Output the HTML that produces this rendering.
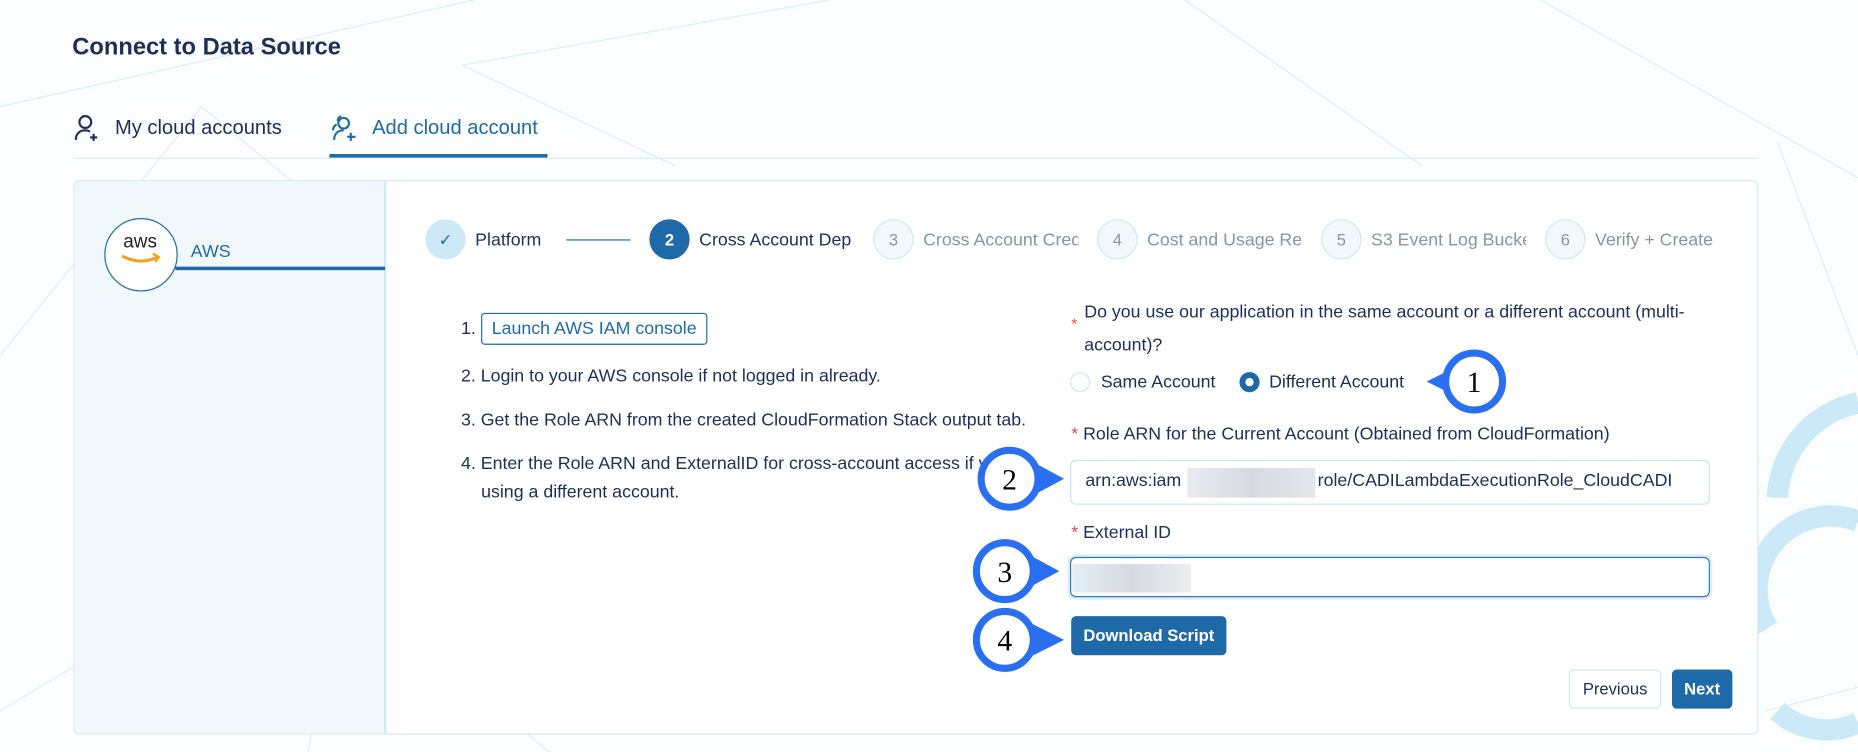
<!DOCTYPE html>
<html><head><meta charset="utf-8"><style>
*{box-sizing:border-box;margin:0;padding:0}
body{width:1858px;height:752px;overflow:hidden;background:#fbfdfe;font-family:"Liberation Sans",sans-serif;color:#1f2d5a;position:relative}
#w{position:absolute;left:0;top:0;width:1568px;height:635px;transform:scale(1.18495);transform-origin:0 0}
.abs{position:absolute}
.t{font-size:15px;white-space:nowrap}
.sc{position:absolute;width:34px;height:34px;border-radius:50%;border:1px solid #cfe8f5;background:#f2f9fd;color:#8a93a8;font-size:14px;text-align:center;line-height:32px}
.sl{position:absolute;font-size:15px;color:#8a93a8;white-space:nowrap;overflow:hidden}
</style></head><body><div id="w">
<svg class="abs" style="left:0;top:0" width="1568" height="635">
<g stroke="#dcedf6" stroke-width="1" fill="none">
<line x1="0" y1="90" x2="400" y2="0"/><line x1="170" y1="90" x2="400" y2="280"/><line x1="0" y1="300" x2="170" y2="90"/><line x1="390" y1="55" x2="700" y2="0"/><line x1="390" y1="55" x2="570" y2="140"/><line x1="130" y1="360" x2="470" y2="640"/><line x1="0" y1="600" x2="300" y2="420"/><line x1="1300" y1="0" x2="1568" y2="150"/><line x1="1500" y1="120" x2="1568" y2="300"/><line x1="1490" y1="600" x2="1568" y2="580"/><line x1="300" y1="420" x2="260" y2="635"/><line x1="1000" y1="0" x2="1200" y2="140"/>
</g>
<g fill="none" stroke="#cbe9f7" stroke-width="18">
<path d="M1500 420 A85 85 0 0 1 1568 340"/>
<path d="M1492 530 A62 62 0 0 1 1568 440"/>
<path d="M1500 600 A62 62 0 0 0 1568 610"/>
</g>
</svg>
<div class="abs" style="left:61px;top:29px;font-size:20px;font-weight:bold;color:#1f2d5a">Connect to Data Source</div>
<svg class="abs" style="left:62px;top:96px" width="24" height="24" viewBox="0 0 24 24" fill="none" stroke="#1f2d5a" stroke-width="1.8"><circle cx="10" cy="7" r="5"/><path d="M2 22c0-5 3-8 8-8 2 0 3 .5 4 1"/><path d="M17 17v6M14 20h6"/></svg>
<div class="abs t" style="left:97px;top:98px;font-size:17px">My cloud accounts</div>
<svg class="abs" style="left:278px;top:96px" width="24" height="24" viewBox="0 0 24 24" fill="none" stroke="#1e6aa8" stroke-width="1.8"><circle cx="12" cy="8" r="4.5"/><path d="M7 6a4 4 0 0 1 3-4M3 14a6 6 0 0 1 3-5M4 22c0-5 3-8 8-8"/><path d="M18 16v7M15 19.5h7"/></svg>
<div class="abs t" style="left:314px;top:98px;font-size:17px;color:#1e6aa8">Add cloud account</div>
<div class="abs" style="left:62px;top:133px;width:1422px;height:1px;background:#d6ecf6"></div>
<div class="abs" style="left:278px;top:130px;width:184px;height:3px;background:#1e6aa8"></div>

<div class="abs" style="left:62px;top:152px;width:1422px;height:468px;border:1px solid #d3e9f4;border-radius:5px;background:#fff;overflow:hidden">
 <div class="abs" style="left:0;top:0;width:263px;height:468px;background:#f1f8fc;border-right:2px solid #d3e9f4"></div>
</div>
<div class="abs" style="left:148px;top:225px;width:177px;height:3px;background:#1e6aa8"></div>
<div class="abs" style="left:88px;top:184px;width:62px;height:62px;border-radius:50%;border:1px solid #1e6aa8;background:#fff"></div>
<div class="abs" style="left:104px;top:196px;font-size:16px;color:#222">aws</div>
<svg class="abs" style="left:101px;top:213px" width="36" height="12"><path d="M2 3q15 8 30 1" stroke="#f3a11e" stroke-width="2.5" fill="none"/><path d="M28 1l5 3-3 4" stroke="#f3a11e" stroke-width="2" fill="none"/></svg>
<div class="abs" style="left:161px;top:204px;font-size:15px;color:#1e6aa8">AWS</div>

<div class="sc" style="left:359px;top:185px;background:#cde8f7;border-color:#cde8f7;color:#1e6aa8">✓</div>
<div class="abs t" style="left:401px;top:194px">Platform</div>
<div class="abs" style="left:478px;top:202px;width:54px;height:1px;background:#1e6aa8"></div>
<div class="sc" style="left:548px;top:185px;background:#1e6aa8;border-color:#1e6aa8;color:#fff;font-weight:bold">2</div>
<div class="abs t" style="left:590px;top:194px;width:130px;overflow:hidden">Cross Account Dep</div>
<div class="sc" style="left:737px;top:185px">3</div><div class="sl" style="left:779px;top:194px;width:131px">Cross Account Credentials</div>
<div class="sc" style="left:926px;top:185px">4</div><div class="sl" style="left:968px;top:194px;width:130px">Cost and Usage Report</div>
<div class="sc" style="left:1115px;top:185px">5</div><div class="sl" style="left:1157px;top:194px;width:131px">S3 Event Log Bucket</div>
<div class="sc" style="left:1304px;top:185px">6</div><div class="sl" style="left:1346px;top:194px;width:110px">Verify + Create</div>

<div class="abs t" style="left:389px;top:269px">1.</div>
<div class="abs t" style="left:406px;top:264px;border:1px solid #1e6aa8;border-radius:3px;padding:4px 8px;color:#1e6aa8">Launch AWS IAM console</div>
<div class="abs t" style="left:389px;top:309px">2. Login to your AWS console if not logged in already.</div>
<div class="abs t" style="left:389px;top:346px">3. Get the Role ARN from the created CloudFormation Stack output tab.</div>
<div class="abs t" style="left:389px;top:383px">4. Enter the Role ARN and ExternalID for cross-account access if you are</div>
<div class="abs t" style="left:406px;top:407px">using a different account.</div>

<div class="abs" style="left:904px;top:266px;color:#e5484d;font-size:13px">*</div>
<div class="abs t" style="left:915px;top:250px;line-height:28px;width:540px;white-space:normal">Do you use our application in the same account or a different account (multi-account)?</div>
<div class="abs" style="left:903px;top:314px;width:17px;height:17px;border-radius:50%;border:1px solid #cde8f7"></div>
<div class="abs t" style="left:929px;top:314px">Same Account</div>
<div class="abs" style="left:1046px;top:314px;width:17px;height:17px;border-radius:50%;border:5px solid #1e6aa8;background:#fff"></div>
<div class="abs t" style="left:1071px;top:314px">Different Account</div>
<div class="abs t" style="left:904px;top:358px"><span style="color:#e5484d">* </span>Role ARN for the Current Account (Obtained from CloudFormation)</div>
<div class="abs" style="left:903px;top:388px;width:540px;height:38px;border:1px solid #c9e4f2;border-radius:5px"></div>
<div class="abs t" style="left:916px;top:397px">arn:aws:iam</div>
<div class="abs" style="left:1002px;top:395px;width:108px;height:25px;background:linear-gradient(90deg,#e9ecf0,#d6d9e0,#e3e6ea)"></div>
<div class="abs t" style="left:1112px;top:397px">role/CADILambdaExecutionRole_CloudCADI</div>
<div class="abs t" style="left:904px;top:441px"><span style="color:#e5484d">* </span>External ID</div>
<div class="abs" style="left:903px;top:470px;width:540px;height:34px;border:1px solid #2e7bb8;border-radius:5px;box-shadow:0 0 0 2px #d7eef8"></div>
<div class="abs" style="left:905px;top:476px;width:100px;height:24px;background:linear-gradient(90deg,#e4eef4,#d6d9e0,#eceef1)"></div>
<div class="abs" style="left:904px;top:520px;width:131px;height:33px;background:#1e6aa8;border-radius:4px;color:#fff;font-size:14px;font-weight:bold;text-align:center;line-height:33px">Download Script</div>
<div class="abs" style="left:1324px;top:565px;width:78px;height:33px;border:1px solid #cde8f7;border-radius:4px;font-size:14px;text-align:center;line-height:31px">Previous</div>
<div class="abs" style="left:1411px;top:565px;width:51px;height:33px;background:#1e6aa8;border-radius:4px;color:#fff;font-size:14px;font-weight:bold;text-align:center;line-height:33px">Next</div>

<svg class="abs" style="left:0;top:0" width="1568" height="635" font-family="Liberation Serif,serif" font-size="25">
<g fill="#fff" stroke="#2a6ff0" stroke-width="6">
<path d="M1204 322 L1232 308 L1232 336 Z" fill="#2a6ff0" stroke="none"/>
<circle cx="1244" cy="322" r="24"/>
<path d="M898 404 L872 390 L872 418 Z" fill="#2a6ff0" stroke="none"/>
<circle cx="852" cy="404" r="24"/>
<path d="M894 482 L868 468 L868 496 Z" fill="#2a6ff0" stroke="none"/>
<circle cx="848" cy="482" r="24"/>
<path d="M898 540 L870 526 L870 554 Z" fill="#2a6ff0" stroke="none"/>
<circle cx="848" cy="540" r="24"/>
</g>
<g fill="#000" text-anchor="middle">
<text x="1244" y="331">1</text><text x="852" y="413">2</text><text x="848" y="491">3</text><text x="848" y="549">4</text>
</g>
</svg>
</div></body></html>
